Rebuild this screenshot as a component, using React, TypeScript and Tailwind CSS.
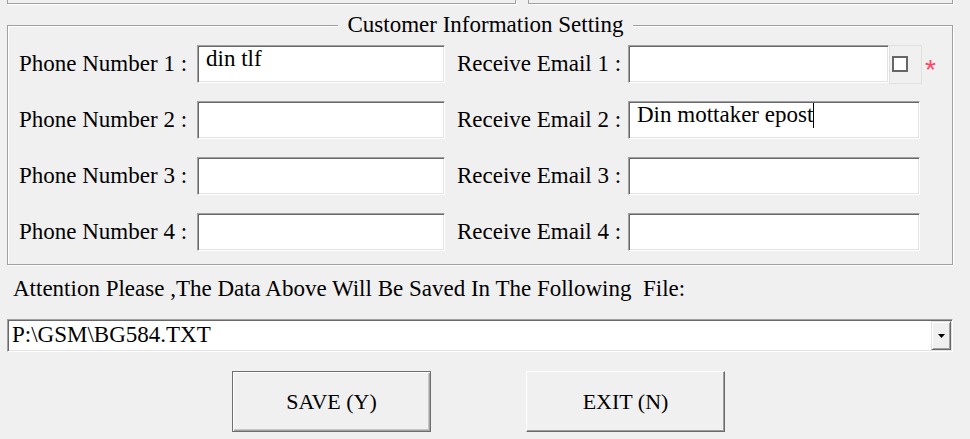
import { ReactNode } from "react";

const sunken =
  "bg-white border border-t-[#a0a0a0] border-l-[#a0a0a0] border-b-white border-r-white shadow-[inset_1px_1px_0_#696969,inset_-1px_-1px_0_#e3e3e3]";

function Field(props: { width: string; children?: ReactNode }) {
  return (
    <div className={`${props.width} h-[38px] ${sunken} pl-[8px] leading-[26px] flex items-start`}>
      {props.children}
    </div>
  );
}

function Row(props: { n: number; phone?: string; email?: ReactNode; first?: boolean }) {
  return (
    <div className="flex items-center h-[38px]">
      <div className="w-[178px] whitespace-nowrap">Phone Number {props.n} :</div>
      <Field width="w-[248px]">{props.phone}</Field>
      <div className="w-[171px] ml-[12px] whitespace-nowrap">Receive Email {props.n} :</div>
      {props.first ? (
        <>
          <Field width="w-[261px]" />
          <div className="w-[33px] h-[39px] border border-[#e0e0e0] flex items-center pl-[2px]">
            <div className="w-[16px] h-[16px] border-2 border-[#666] bg-white" />
          </div>
          <div className="ml-[3px] mt-[12px] leading-none text-[#ff4466] text-[28px] font-['Liberation_Sans',sans-serif]">*</div>
        </>
      ) : (
        <Field width="w-[292px]">{props.email}</Field>
      )}
    </div>
  );
}

function Button(props: { label: string; isDefault?: boolean }) {
  const style = props.isDefault
    ? "border border-[#6e6e6e] shadow-[inset_1px_1px_0_#fff,inset_-1px_-1px_0_#a0a0a0,inset_-2px_-2px_0_#c8c8c8]"
    : "border border-t-white border-l-white border-b-[#696969] border-r-[#696969] shadow-[inset_-1px_-1px_0_#a0a0a0]";
  return (
    <div className={`w-[199px] h-[61px] bg-[#f0f0f0] ${style} flex items-center justify-center text-[22px]`}>
      {props.label}
    </div>
  );
}

export default function App() {
  return (
    <div className="w-[970px] h-[439px] bg-[#f0f0f0] text-black font-['Liberation_Serif',serif] text-[23px] px-[7px] overflow-hidden">
      {/* panels above, cut off */}
      <div className="flex gap-[12px]">
        <div className="w-[509px] h-[4px] border-x border-b border-[#a0a0a0] shadow-[1px_1px_0_#fff]" />
        <div className="w-[425px] h-[4px] border-x border-b border-[#a0a0a0] shadow-[1px_1px_0_#fff]" />
      </div>

      <fieldset className="mt-[8px] w-[946px] border border-[#a0a0a0] shadow-[1px_1px_0_#fff,inset_1px_1px_0_#fff] pl-[11px] pt-[7px] pb-[13px]">
        <legend className="mx-auto px-[10px] leading-[26px] bg-[#f0f0f0]">Customer Information Setting</legend>
        <div className="flex flex-col gap-[18px]">
          <Row n={1} phone="din tlf" first />
          <Row
            n={2}
            email={
              <>
                Din mottaker epost
                <span className="inline-block w-[1px] h-[25px] bg-black mt-[1px]" />
              </>
            }
          />
          <Row n={3} />
          <Row n={4} />
        </div>
      </fieldset>

      <div className="mt-[11px] pl-[6px] leading-[26px] whitespace-pre">
        Attention Please ,The Data Above Will Be Saved In The Following  File:
      </div>

      <div className={`mt-[17px] w-[946px] h-[33px] ${sunken} flex p-[1px]`}>
        <div className="flex-1 pl-[3px] leading-[27px]">P:\GSM\BG584.TXT</div>
        <div className="w-[20px] bg-[#f0f0f0] border border-t-[#e3e3e3] border-l-[#e3e3e3] border-b-[#696969] border-r-[#696969] shadow-[inset_1px_1px_0_#fff,inset_-1px_-1px_0_#a0a0a0] flex items-center justify-center">
          <svg width="7" height="4" viewBox="0 0 7 4">
            <path d="M0 0h7L3.5 4z" fill="#000" />
          </svg>
        </div>
      </div>

      <div className="mt-[19px] pl-[225px] flex gap-[95px]">
        <Button label="SAVE (Y)" isDefault />
        <Button label="EXIT (N)" />
      </div>
    </div>
  );
}
